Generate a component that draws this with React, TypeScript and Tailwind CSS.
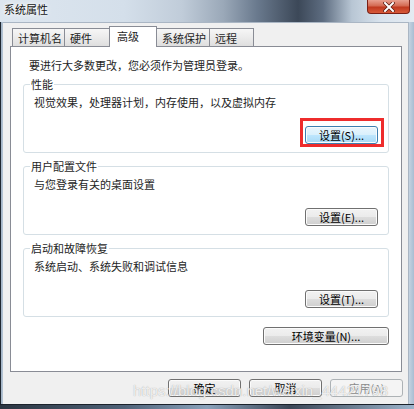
import React from "react";

// Win7 风格按钮
const Btn = ({
  label,
  w = 73,
  focus = false,
  disabled = false,
}: {
  label: string;
  w?: number;
  focus?: boolean;
  disabled?: boolean;
}) => {
  let cls =
    "h-[18px] rounded-[3px] border text-[11px] leading-[12px] flex items-center justify-center shadow-[inset_0_0_0_1px_#fbfbfb] ";
  if (disabled) {
    cls += "border-[#adb2b5] bg-[#f4f4f4] text-[#8a8a8a] shadow-none";
  } else if (focus) {
    cls +=
      "border-[#3c7fb1] bg-[linear-gradient(#eaf6fd_0%,#d9f0fc_50%,#bee6fd_51%,#a7d9f5_100%)] text-black";
  } else {
    cls +=
      "border-[#707070] bg-[linear-gradient(#f2f2f2_0%,#ebebeb_50%,#dddddd_51%,#cfcfcf_100%)] text-black";
  }
  return (
    <div className={cls} style={{ width: w }}>
      {label}
    </div>
  );
};

// 分组框（标题压在上边框上）
const Group = ({
  title,
  desc,
  btn,
  focus = false,
}: {
  title: string;
  desc: string;
  btn: string;
  focus?: boolean;
}) => (
  <div className="mt-[13px] border border-[#d5dfe5] rounded-[3px] pr-[10px] pb-[8px]">
    <span className="block w-fit -mt-[7px] ml-[6px] px-[1px] bg-white text-[11px] leading-[12px] text-[#1e1e1e]">
      {title}
    </span>
    <p className="mt-[6px] pl-[10px] text-[11px] leading-[12px] text-[#1e1e1e]">{desc}</p>
    <div className="mt-[18px] flex justify-end">
      <div className="relative">
        <Btn label={btn} focus={focus} />
        {focus && (
          <span className="absolute -left-[5px] -top-[8px] w-[84px] h-[29px] border-[3px] border-[#ee2c2c]" />
        )}
      </div>
    </div>
  </div>
);

const App = () => {
  const tabs = [
    { name: "计算机名", w: 53 },
    { name: "硬件", w: 46 },
    { name: "高级", w: 48, active: true },
    { name: "系统保护", w: 54 },
    { name: "远程", w: 45 },
  ];

  return (
    <div className="w-[414px] h-[409px] flex flex-col overflow-hidden relative font-['Noto_Sans_CJK_SC','Liberation_Sans',sans-serif] text-black">
      {/* 标题栏 */}
      <div className="h-[22px] flex items-start relative bg-[linear-gradient(90deg,#dde6ef_0%,#d4dfea_30%,#c0ccd9_44%,#9aa8b8_54%,#6a7a8e_62%,#3c4858_72%,#5d6c80_78%,#b8c6d4_85%,#d9e3ed_92%,#e4ebf2_100%)]">
        <span className="ml-[4px] mt-[3px] text-[11px] leading-[12px] text-[#141414] [text-shadow:0_0_6px_#ffffff,0_0_3px_#ffffff]">
          系统属性
        </span>
        <div className="ml-auto mr-[4px] w-[43px] h-[14px] rounded-b-[4px] border border-t-0 border-[#7a2016] bg-[linear-gradient(#e8a090_0%,#d46a52_45%,#c0391f_55%,#d85a3a_100%)] flex items-center justify-center">
          <svg width="12" height="10" viewBox="0 0 12 10">
            <path d="M2 1 L10 9 M10 1 L2 9" stroke="#5a1a10" strokeWidth="3.4" strokeLinecap="square" />
            <path d="M2 1 L10 9 M10 1 L2 9" stroke="#ffffff" strokeWidth="2" strokeLinecap="square" />
          </svg>
        </div>
      </div>

      <div className="flex h-[382px]">
        {/* 左边框 */}
        <div className="w-[3px] bg-[linear-gradient(90deg,#1f2730_0px,#1f2730_1px,#9fb1c4_1px,#b8c7d6_3px)]" />

        {/* 客户区 */}
        <div className="w-[406px] bg-[#f0f0f0] border-t border-r border-[#aab6c4] pt-[3px] pl-[7px] pr-[5px]">
          {/* 选项卡 */}
          <div className="h-[21px] flex items-end pl-[2px] relative z-10 -mb-px">
            {tabs.map((t, i) =>
              t.active ? (
                <div
                  key={i}
                  className="h-[21px] -ml-px bg-white border border-b-0 border-[#898c95] pl-[7px] pt-[3px] text-[11px] leading-[12px] text-[#1e1e1e]"
                  style={{ width: t.w }}
                >
                  {t.name}
                </div>
              ) : (
                <div
                  key={i}
                  className={
                    "h-[18px] mb-px border border-b-0 border-[#898c95] pl-[5px] pt-[3px] text-[11px] leading-[12px] text-[#1e1e1e] bg-[linear-gradient(#f6f6f6_0%,#ebebeb_50%,#dedede_100%)] " +
                    (i > 0 ? "-ml-px" : "")
                  }
                  style={{ width: t.w }}
                >
                  {t.name}
                </div>
              )
            )}
          </div>

          {/* 选项卡内容 */}
          <div className="w-[392px] h-[326px] bg-white border border-[#898c95] px-[12px] pt-[12px]">
            <p className="pl-[6px] text-[11px] leading-[12px] text-[#1e1e1e]">
              要进行大多数更改，您必须作为管理员登录。
            </p>
            <Group title="性能" desc="视觉效果，处理器计划，内存使用，以及虚拟内存" btn="设置(S)..." focus />
            <Group title="用户配置文件" desc="与您登录有关的桌面设置" btn="设置(E)..." />
            <Group title="启动和故障恢复" desc="系统启动、系统失败和调试信息" btn="设置(T)..." />
            <div className="mt-[10px] flex justify-end">
              <Btn label="环境变量(N)..." w={126} />
            </div>
          </div>

          {/* 底部按钮 */}
          <div className="mt-[7px] flex justify-end gap-[8px]">
            <Btn label="确定" />
            <Btn label="取消" />
            <Btn label="应用(A)" disabled />
          </div>
        </div>

        {/* 右边框 */}
        <div className="w-[5px] bg-[linear-gradient(90deg,#c5d3e1,#a9bdd2)]" />
      </div>

      {/* 底边框 */}
      <div className="h-[5px] border-t border-[#1b222b] bg-[linear-gradient(90deg,#2a3440_0%,#4f6278_30%,#8aa2bb_50%,#3b4656_70%,#9cb4cc_100%)]" />

      {/* 水印 */}
      <span className="absolute left-[133px] top-[382px] text-[15px] leading-[18px] font-['Liberation_Sans',sans-serif] text-white/80 [text-shadow:0_0_1px_#9a9a9a]">
        https://blog.csdn.net/weixin_44421798
      </span>
    </div>
  );
};

export default App;
